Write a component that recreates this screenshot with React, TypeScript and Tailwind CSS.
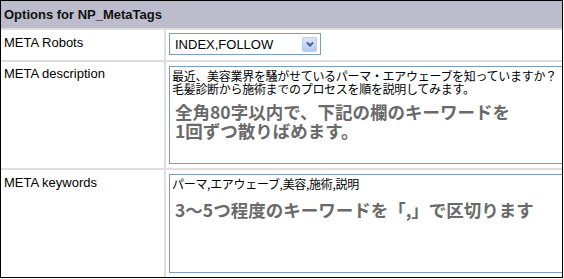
export default function App() {
  const label = "text-[13px] leading-[15px] text-black px-[3px]";
  const jp = "font-['Noto_Sans_CJK_JP',sans-serif]";
  const small = `${jp} text-[12px] leading-[13px] text-black whitespace-nowrap tracking-[-0.3px]`;
  const note = `${jp} pl-[3px] text-[17.5px] leading-[19px] font-bold text-[#6a6a6a] whitespace-nowrap`;

  return (
    <div className="w-[564px] h-[279px] bg-white font-['Liberation_Sans',sans-serif]">
      <div className="w-[563px] h-[278px] border border-black overflow-hidden bg-[#dedede] flex flex-col gap-[2px]">
        {/* header */}
        <div className="h-[27px] shrink-0 bg-[#bcbccc] px-[3px] flex items-center">
          <span className="text-[13px] font-bold text-[#111] leading-none">Options for NP_MetaTags</span>
        </div>

        {/* robots */}
        <div className="h-[30px] shrink-0 grid grid-cols-[163px_1fr] gap-[2px]">
          <div className={`bg-white pt-[5px] ${label}`}>META Robots</div>
          <div className="bg-white pl-[3px] pt-[3px]">
            <div className="w-[152px] h-[22px] border border-[#7f9db9] bg-white flex items-center justify-between">
              <span className="pl-[5px] text-[13px] leading-none text-black">INDEX,FOLLOW</span>
              <span className="mr-[3px] w-[15px] h-[15px] rounded-[2px] border border-[#b9cdf5] bg-gradient-to-b from-[#dbe6fd] to-[#b3c9f7] flex items-center justify-center">
                <svg width="8" height="6" viewBox="0 0 8 6">
                  <path d="M1 1.5 L4 4.5 L7 1.5" fill="none" stroke="#4d6185" strokeWidth="2" />
                </svg>
              </span>
            </div>
          </div>
        </div>

        {/* description */}
        <div className="h-[106px] shrink-0 grid grid-cols-[163px_1fr] gap-[2px]">
          <div className={`bg-white pt-[4px] ${label}`}>META description</div>
          <div className="bg-white pl-[3px] pt-[4px]">
            <div className="w-[440px] h-[98px] border border-[#7f9db9] bg-white px-[2px] pt-[2px]">
              <p className={small}>最近、美容業界を騒がせているパーマ・エアウェーブを知っていますか？</p>
              <p className={small}>毛髪診断から施術までのプロセスを順を説明してみます。</p>
              <p className={`${note} mt-[7px]`}>
                全角80字以内で、下記の欄のキーワードを
                <br />
                1回ずつ散りばめます。
              </p>
            </div>
          </div>
        </div>

        {/* keywords */}
        <div className="flex-1 grid grid-cols-[163px_1fr] gap-[2px]">
          <div className={`bg-white pt-[5px] ${label}`}>META keywords</div>
          <div className="bg-white pl-[3px] pt-[4px]">
            <div className="w-[440px] h-[99px] border border-[#7f9db9] bg-white px-[2px] pt-[2px]">
              <p className={small}>パーマ,エアウェーブ,美容,施術,説明</p>
              <p className={`${note} mt-[10px]`}>3〜5つ程度のキーワードを「,」で区切ります</p>
            </div>
          </div>
        </div>
      </div>
    </div>
  );
}
